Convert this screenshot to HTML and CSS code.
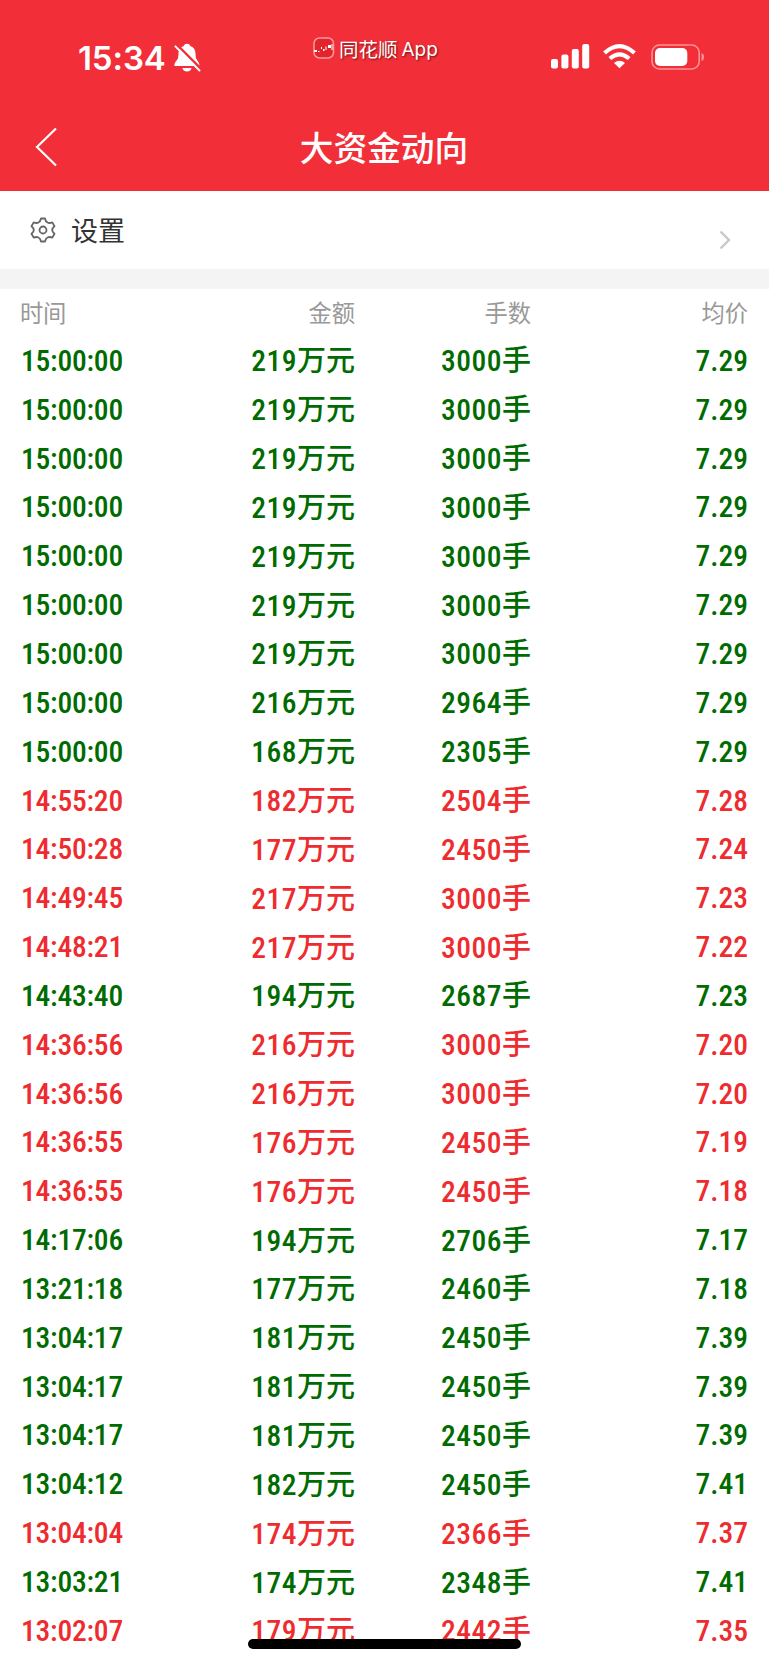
FILE: index.html
```html
<!DOCTYPE html>
<html lang="zh-CN">
<head>
  <meta charset="UTF-8" />
  <meta name="viewport" content="width=device-width, initial-scale=1" />
  <title>大资金动向</title>
  <link rel="stylesheet" href="styles.css">
</head>
<body>
  <header>
    <div class="status-bar">
      <div class="clock">
        <span>15:34</span>
        <svg width="28" height="30" viewBox="0 0 28 30">
          <path d="M1.500 23 Q0.800 20.500 4 17 Q5.500 15 5.500 11 C5.500 6 8 4 10.500 3.300 C11.500 0 16.500 0 17.500 3.300 C21 4.300 22.500 7 22.500 11 Q22.500 15 24 17 Q27 20.500 26.200 23 Z" fill="#fff" />
          <path d="M9.500 25 H18.500 C18 29.700 10 29.700 9.500 25 Z" fill="#fff" />
          <path d="M4.300 2 L28 25.800" stroke="#f22f38" stroke-width="2.400" />
          <path d="M2.400 3.400 L26.500 27.500" stroke="#fff" stroke-width="2" stroke-linecap="round" />
        </svg>
      </div>
      <div class="app-name">
        <svg width="22" height="22" viewBox="0 0 22 22">
          <rect x="1" y="1" width="19.500" height="20" rx="5.500" fill="#e3242d" stroke="#fa9a9e" stroke-width="1.500" />
          <path d="M1 13 H4 V15 H1 Z M5 14 H6.500 V15 H5 Z M8 10 H9 V12 H8 Z M10 12 H11.500 V14 H10 Z M12.500 9.500 H13.500 V13 H12.500 Z M15 8 H18 V11 H15 Z M18.500 7 H19.500 V13 H18.500 Z" fill="#fff" />
        </svg>
        <span>同花顺</span>
        <i>App</i>
      </div>
      <div class="signals">
        <svg width="39" height="25" viewBox="0 0 39 25" fill="#fff">
          <rect x="0" y="15" width="7" height="9.500" rx="2" />
          <rect x="10.400" y="10.500" width="7" height="14" rx="2" />
          <rect x="20.800" y="5" width="7" height="19.500" rx="2" />
          <rect x="31.200" y="0" width="7" height="24.500" rx="2" />
        </svg>
        <svg class="wifi" width="33" height="25" viewBox="0 0 33 25" fill="none" stroke="#fff" stroke-width="4">
          <path d="M1.500 9 Q16.500 -4.800 31.500 9" />
          <path d="M6.800 14.600 Q16.500 6 26.200 14.600" />
          <path d="M11 19 Q16.500 14.500 22 19 L16.500 24.300 Z" fill="#fff" stroke="none" />
        </svg>
        <svg width="54" height="26" viewBox="0 0 54 26">
          <rect x="1" y="1" width="47.200" height="24" rx="7.500" fill="none" stroke="#fa9297" stroke-width="1.600" />
          <rect x="4" y="4" width="32.300" height="18" rx="5" fill="#fff" />
          <path d="M50.500 9 Q53.200 10 53.200 13 Q53.200 16 50.500 17 Z" fill="#fa9297" />
        </svg>
      </div>
    </div>
    <div class="nav-bar">
      <svg class="back" width="22" height="40" viewBox="0 0 22 40">
        <path d="M21 1.500 L2 20 L21 38.500" fill="none" stroke="#fff" stroke-width="2.200" />
      </svg>
      <h1>大资金动向</h1>
    </div>
  </header>

  <div class="settings">
    <svg class="gear" width="26" height="26" viewBox="0 0 26 26" fill="none" stroke="#666" stroke-width="1.800" stroke-linejoin="round">
      <path d="M11 1.500 H15 Q15.600 4.700 17.500 5.500 Q19.500 6.500 22.300 5.400 L24.500 9.200 Q22.200 11 22.200 13 Q22.200 15 24.500 16.800 L22.300 20.600 Q19.500 19.500 17.500 20.500 Q15.600 21.300 15 24.500 H11 Q10.400 21.300 8.500 20.500 Q6.500 19.500 3.700 20.600 L1.500 16.800 Q3.800 15 3.800 13 Q3.800 11 1.500 9.200 L3.700 5.400 Q6.500 6.500 8.500 5.500 Q10.400 4.700 11 1.500 Z" />
      <circle cx="13" cy="13" r="3.500" />
    </svg>
    <span>设置</span>
    <svg class="arrow" width="12" height="20" viewBox="0 0 12 20">
      <path d="M1.500 1.500 L10 10 L1.500 18.500" fill="none" stroke="#c8c8c8" stroke-width="2.400" />
    </svg>
  </div>

  <main>
    <div class="row head"><span>时间</span><span>金额</span><span>手数</span><span>均价</span></div>
    <div class="row sell"><b>15:00:00</b><span><b>219</b>万元</span><span><b>3000</b>手</span><b>7.29</b></div>
    <div class="row sell"><b>15:00:00</b><span><b>219</b>万元</span><span><b>3000</b>手</span><b>7.29</b></div>
    <div class="row sell"><b>15:00:00</b><span><b>219</b>万元</span><span><b>3000</b>手</span><b>7.29</b></div>
    <div class="row sell"><b>15:00:00</b><span><b>219</b>万元</span><span><b>3000</b>手</span><b>7.29</b></div>
    <div class="row sell"><b>15:00:00</b><span><b>219</b>万元</span><span><b>3000</b>手</span><b>7.29</b></div>
    <div class="row sell"><b>15:00:00</b><span><b>219</b>万元</span><span><b>3000</b>手</span><b>7.29</b></div>
    <div class="row sell"><b>15:00:00</b><span><b>219</b>万元</span><span><b>3000</b>手</span><b>7.29</b></div>
    <div class="row sell"><b>15:00:00</b><span><b>216</b>万元</span><span><b>2964</b>手</span><b>7.29</b></div>
    <div class="row sell"><b>15:00:00</b><span><b>168</b>万元</span><span><b>2305</b>手</span><b>7.29</b></div>
    <div class="row buy"><b>14:55:20</b><span><b>182</b>万元</span><span><b>2504</b>手</span><b>7.28</b></div>
    <div class="row buy"><b>14:50:28</b><span><b>177</b>万元</span><span><b>2450</b>手</span><b>7.24</b></div>
    <div class="row buy"><b>14:49:45</b><span><b>217</b>万元</span><span><b>3000</b>手</span><b>7.23</b></div>
    <div class="row buy"><b>14:48:21</b><span><b>217</b>万元</span><span><b>3000</b>手</span><b>7.22</b></div>
    <div class="row sell"><b>14:43:40</b><span><b>194</b>万元</span><span><b>2687</b>手</span><b>7.23</b></div>
    <div class="row buy"><b>14:36:56</b><span><b>216</b>万元</span><span><b>3000</b>手</span><b>7.20</b></div>
    <div class="row buy"><b>14:36:56</b><span><b>216</b>万元</span><span><b>3000</b>手</span><b>7.20</b></div>
    <div class="row buy"><b>14:36:55</b><span><b>176</b>万元</span><span><b>2450</b>手</span><b>7.19</b></div>
    <div class="row buy"><b>14:36:55</b><span><b>176</b>万元</span><span><b>2450</b>手</span><b>7.18</b></div>
    <div class="row sell"><b>14:17:06</b><span><b>194</b>万元</span><span><b>2706</b>手</span><b>7.17</b></div>
    <div class="row sell"><b>13:21:18</b><span><b>177</b>万元</span><span><b>2460</b>手</span><b>7.18</b></div>
    <div class="row sell"><b>13:04:17</b><span><b>181</b>万元</span><span><b>2450</b>手</span><b>7.39</b></div>
    <div class="row sell"><b>13:04:17</b><span><b>181</b>万元</span><span><b>2450</b>手</span><b>7.39</b></div>
    <div class="row sell"><b>13:04:17</b><span><b>181</b>万元</span><span><b>2450</b>手</span><b>7.39</b></div>
    <div class="row sell"><b>13:04:12</b><span><b>182</b>万元</span><span><b>2450</b>手</span><b>7.41</b></div>
    <div class="row buy"><b>13:04:04</b><span><b>174</b>万元</span><span><b>2366</b>手</span><b>7.37</b></div>
    <div class="row sell"><b>13:03:21</b><span><b>174</b>万元</span><span><b>2348</b>手</span><b>7.41</b></div>
    <div class="row buy"><b>13:02:07</b><span><b>179</b>万元</span><span><b>2442</b>手</span><b>7.35</b></div>
  </main>

  <div class="home-indicator"></div>
</body>
</html>
```
FILE: styles.css
```css
* {
  box-sizing: border-box;
}

body {
  margin: 0;
  height: 1665px;
  overflow: hidden;
  background: #fff;
  font-family: "Noto Sans CJK SC", sans-serif;
}

svg {
  display: block;
  flex: none;
}

/* Cabecera */
header {
  height: 191px;
  background: #f22f38;
  color: #fff;
}

.status-bar {
  height: 105px;
  padding: 0 64px 0 78px;
  display: grid;
  grid-template-columns: 235px 1fr auto;
  align-items: start;
}

.clock {
  display: flex;
  gap: 8px;
  padding-top: 43px;
  font: 600 33px/30px Inter, sans-serif;
}

.clock span {
  width: 87px;
  letter-spacing: -0.1px;
  white-space: nowrap;
}

.app-name {
  display: flex;
  gap: 4px;
  padding-top: 37px;
  font-size: 19.500px;
  line-height: 24px;
  text-shadow: 1px 1px 2px rgba(60, 0, 0, 0.7);
  white-space: nowrap;
}

.app-name i {
  padding-top: 1px;
  font-family: Inter, sans-serif;
  font-size: 19px;
  font-style: normal;
}

.signals {
  display: flex;
  padding-top: 44px;
}

.wifi {
  margin: 0 15px 0 13px;
}

/* Barra del título */
.nav-bar {
  height: 86px;
  display: grid;
  grid-template-columns: 1fr auto 1fr;
  padding: 0 36px 0 35px;
}

.back {
  margin-top: 22px;
}

h1 {
  margin: 18px 0 0;
  font-size: 33.700px;
  line-height: 48px;
  font-weight: 500;
}

/* Ajustes */
.settings {
  height: 98px;
  border-bottom: 20px solid #f4f4f4;
  padding: 0 38px 0 30px;
  display: flex;
}

.gear {
  margin-top: 26px;
}

.settings span {
  margin: 19px auto 0 15px;
  font-size: 27px;
  line-height: 40px;
  color: #333;
}

.arrow {
  margin-top: 39px;
}

/* Tabla de operaciones */
.row {
  height: 48.850px;
  padding: 0 21px 0 20px;
  display: grid;
  grid-template-columns: 110px 225px 176px 1fr;
  align-items: center;
  text-align: right;
  font-size: 29px;
  line-height: 40px;
  font-weight: 500;
  white-space: nowrap;
}

.row > span {
  margin-top: -3px;
}

.row b {
  font-family: Roboto, sans-serif;
  font-size: 29.500px;
  font-weight: 480;
  font-stretch: 85%;
}

.row > b {
  margin-top: -1px;
}

.row span b {
  letter-spacing: 0.500px;
}

.row > :first-child {
  padding-left: 1px;
  letter-spacing: -0.200px;
  text-align: left;
}

.head {
  height: 48px;
  font-size: 23.300px;
  font-weight: 400;
  color: #999;
}

.head > :first-child {
  padding-left: 0;
}

.sell {
  color: #006b00;
}

.buy {
  color: #ee2b2e;
}

.home-indicator {
  position: fixed;
  left: 248px;
  top: 1639px;
  width: 273px;
  height: 10px;
  border-radius: 5px;
  background: #000;
}
```
